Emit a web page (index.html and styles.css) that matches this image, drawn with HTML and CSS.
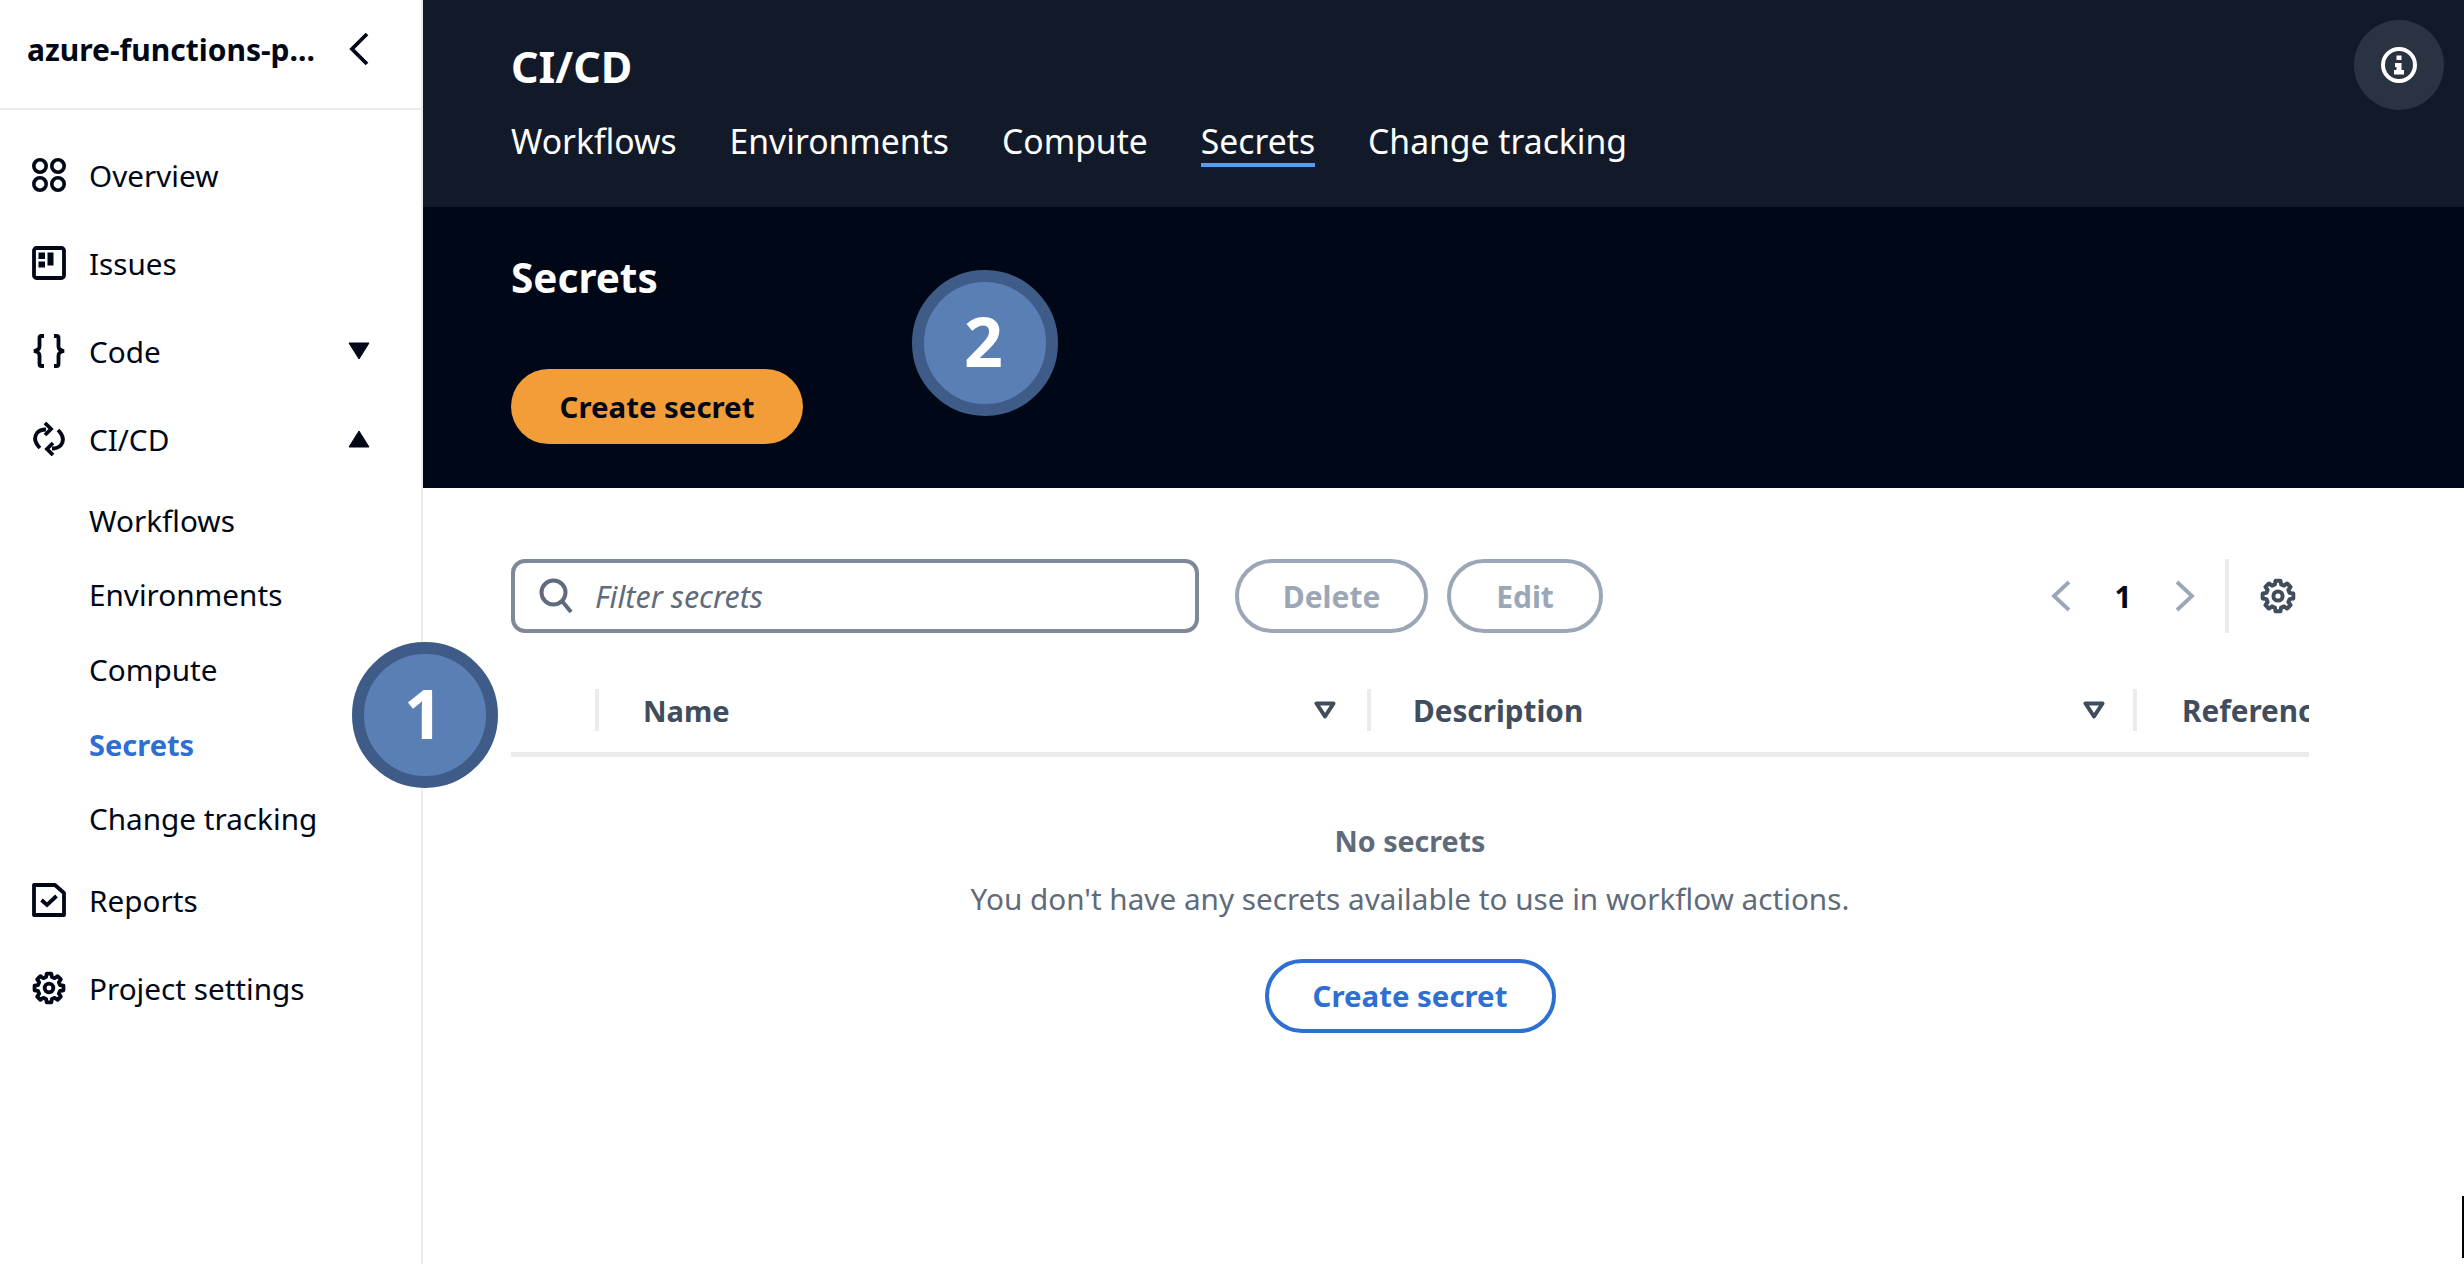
FILE: index.html
```html
<!DOCTYPE html>
<html lang="en">

<head>
    <meta charset="UTF-8">
    <title>Secrets - CI/CD</title>
    <link rel="stylesheet" href="styles.css">
</head>

<body>
    <svg class="defs" width="0" height="0">
        <symbol id="gear" viewBox="0 0 36 36">
            <polygon transform="translate(18 18)" fill="none" stroke="currentColor" stroke-width="4" stroke-linejoin="round" points="11.59,-3.11 15.31,-2.42 15.31,2.42 11.59,3.11 10.39,6 12.54,9.11 9.11,12.54 6,10.39 3.11,11.59 2.42,15.31 -2.42,15.31 -3.11,11.59 -6,10.39 -9.11,12.54 -12.54,9.11 -10.39,6 -11.59,3.11 -15.31,2.42 -15.31,-2.42 -11.59,-3.11 -10.39,-6 -12.54,-9.11 -9.11,-12.54 -6,-10.39 -3.11,-11.59 -2.42,-15.31 2.42,-15.31 3.11,-11.59 6,-10.39 9.11,-12.54 12.54,-9.11 10.39,-6" />
            <circle cx="18" cy="18" r="4.6" fill="none" stroke="currentColor" stroke-width="4" />
        </symbol>
        <symbol id="sort" viewBox="0 0 22 18">
            <path d="M2.500 2.500h17L11 15.500z" fill="none" stroke="currentColor" stroke-width="4" stroke-linejoin="round" />
        </symbol>
    </svg>

    <div class="app">
        <aside class="sidebar">
            <div class="project">
                <span class="project-name">azure-functions-p...</span>
                <svg class="back" viewBox="0 0 20 34">
                    <path d="M18 2L3 17l15 15" fill="none" stroke="currentColor" stroke-width="3.8" />
                </svg>
            </div>
            <nav class="nav">
                <a class="nav-item">
                    <svg class="nav-icon" viewBox="0 0 34 34" fill="none" stroke="currentColor" stroke-width="3.6">
                        <circle cx="8" cy="8" r="6.200" />
                        <circle cx="26" cy="8" r="6.200" />
                        <circle cx="8" cy="26" r="6.200" />
                        <circle cx="26" cy="26" r="6.200" />
                    </svg>
                    Overview
                </a>
                <a class="nav-item">
                    <svg class="nav-icon" viewBox="0 0 34 34">
                        <rect x="2" y="2" width="30" height="30" rx="2.500" fill="none" stroke="currentColor" stroke-width="3.800" />
                        <path d="M6.500 6.500h6.500v6.500H6.500zM6.500 15.500h6.500v6H6.500zM15.500 6.500h6v13h-6z" fill="currentColor" />
                    </svg>
                    Issues
                </a>
                <a class="nav-item">
                    <svg class="nav-icon" viewBox="0 0 34 34" fill="none" stroke="currentColor" stroke-width="3.800">
                        <path d="M12 2H9.500Q7.500 2 7.500 4v8.500Q7.500 16 2 17q5.500 1 5.500 4.500V30q0 2 2 2H12" />
                        <path d="M22 2h2.500q2 0 2 2v8.500q0 3.500 5.500 4.500-5.500 1-5.500 4.500V30q0 2-2 2H22" />
                    </svg>
                    Code
                    <svg class="caret" viewBox="0 0 22 18"><path d="M1 1h20L11 17z" fill="currentColor" stroke="currentColor" stroke-linejoin="round" /></svg>
                </a>
                <a class="nav-item">
                    <svg class="nav-icon" viewBox="0 0 34 34" fill="none" stroke="currentColor" stroke-width="3.800">
                        <path d="M8 26Q0 18 5 11q3-3.500 9-3.500" />
                        <path d="M13 1l6 6-6 6" />
                        <path d="M26 8q8 8 3 15-3 3.500-9 3.500" />
                        <path d="M21 33l-6-6 6-6" />
                    </svg>
                    CI/CD
                    <svg class="caret" viewBox="0 0 22 18"><path d="M1 17h20L11 1z" fill="currentColor" stroke="currentColor" stroke-linejoin="round" /></svg>
                </a>
                <div class="subnav">
                    <a class="sub-item">Workflows</a>
                    <a class="sub-item">Environments</a>
                    <a class="sub-item">Compute</a>
                    <a class="sub-item active">Secrets</a>
                    <a class="sub-item">Change tracking</a>
                </div>
                <a class="nav-item">
                    <svg class="nav-icon" viewBox="0 0 34 34" fill="none" stroke="currentColor" stroke-width="3.800">
                        <path d="M2 2h21l9 8v22H2z" stroke-linejoin="round" />
                        <path d="M9.500 17l5.500 5 9.500-9" />
                    </svg>
                    Reports
                </a>
                <a class="nav-item">
                    <svg class="nav-icon"><use href="#gear" /></svg>
                    Project settings
                </a>
            </nav>
        </aside>

        <main class="main">
            <header class="topbar">
                <h1 class="page-title">CI/CD</h1>
                <div class="tabs">
                    <a class="tab">Workflows</a>
                    <a class="tab">Environments</a>
                    <a class="tab">Compute</a>
                    <a class="tab active">Secrets</a>
                    <a class="tab">Change tracking</a>
                </div>
                <button class="info-btn">
                    <svg viewBox="0 0 36 36" width="36" height="36">
                        <circle cx="18" cy="18" r="16" fill="none" stroke="currentColor" stroke-width="4" />
                        <path d="M15.500 8.500h5v4.500h-5zM14 16h6.500v7H23v4.500H13V23h2.500v-3H14z" fill="currentColor" />
                    </svg>
                </button>
            </header>

            <section class="hero">
                <h2 class="hero-title">Secrets</h2>
                <button class="btn-primary">Create secret</button>
            </section>

            <section class="content">
                <div class="toolbar">
                    <div class="search">
                        <svg class="search-icon" viewBox="0 0 34 36" fill="none" stroke="currentColor" stroke-width="4">
                            <circle cx="14.500" cy="14.500" r="12" />
                            <path d="M23 23l9 11" />
                        </svg>
                        <span class="search-text">Filter secrets</span>
                    </div>
                    <button class="btn-disabled delete">Delete</button>
                    <button class="btn-disabled edit">Edit</button>
                    <div class="pager">
                        <svg class="pager-arrow" viewBox="0 0 20 32"><path d="M18 2L3 16l15 14" fill="none" stroke="currentColor" stroke-width="3.800" /></svg>
                        <span class="page-num">1</span>
                        <svg class="pager-arrow" viewBox="0 0 20 32"><path d="M2 2l15 14L2 30" fill="none" stroke="currentColor" stroke-width="3.800" /></svg>
                        <span class="pager-divider"></span>
                        <svg class="pager-gear"><use href="#gear" /></svg>
                    </div>
                </div>

                <div class="table-head">
                    <div></div>
                    <div class="col col-name">Name<svg class="sort"><use href="#sort" /></svg></div>
                    <div class="col col-desc">Description<svg class="sort"><use href="#sort" /></svg></div>
                    <div class="col col-ref">Reference name</div>
                </div>

                <div class="empty">
                    <div class="empty-title">No secrets</div>
                    <p class="empty-text">You don't have any secrets available to use in workflow actions.</p>
                    <button class="btn-outline">Create secret</button>
                </div>
            </section>
        </main>
    </div>

    <div class="step step-one">1</div>
    <div class="step step-two">2</div>
    <div class="edge-mark"></div>
</body>

</html>
```

FILE: styles.css
```css
* {
    box-sizing: border-box;
}

body {
    margin: 0;
    background: #ffffff;
    color: #000716;
    font-family: "Noto Sans", sans-serif;
    overflow: hidden;
}

.defs {
    position: absolute;
}

button {
    font-family: inherit;
}

.app {
    display: flex;
    height: 1264px;
}

/* sidebar */
.sidebar {
    width: 423px;
    flex-shrink: 0;
    border-right: 2px solid #e9ebed;
}

.project {
    display: flex;
    align-items: center;
    justify-content: space-between;
    height: 110px;
    padding: 0 52px 10px 27px;
    border-bottom: 2px solid #e9ebed;
}

.project-name {
    font-size: 30px;
    font-weight: 700;
    white-space: nowrap;
}

.back {
    width: 20px;
    height: 34px;
}

.nav {
    padding-top: 22px;
}

.nav-item {
    display: flex;
    align-items: center;
    height: 88px;
    padding: 0 51px 2px 32px;
    font-size: 29.7px;
}

.nav-icon {
    width: 34px;
    height: 34px;
    margin-right: 23px;
}

.caret {
    width: 22px;
    height: 18px;
    margin-left: auto;
}

.subnav {
    display: flex;
    flex-direction: column;
    height: 373px;
}

.sub-item {
    flex: 1;
    display: flex;
    align-items: center;
    padding: 0 0 2px 89px;
    font-size: 29.7px;
}

.sub-item.active {
    color: #2d6fd2;
    font-size: 29px;
    font-weight: 700;
}

/* main column */
.main {
    flex: 1;
    min-width: 0;
    position: relative;
}

.topbar {
    height: 207px;
    padding: 42px 0 0 88px;
    background: #121a29;
    color: #ffffff;
}

.page-title {
    margin: 0;
    font-size: 43px;
    line-height: 50px;
    font-weight: 700;
}

.tabs {
    display: flex;
    gap: 53px;
    margin-top: 27px;
}

.tab {
    height: 48px;
    font-size: 33.7px;
    line-height: 44px;
}

.tab.active {
    border-bottom: 4px solid #5c9bea;
}

.info-btn {
    position: absolute;
    top: 20px;
    right: 20px;
    display: flex;
    align-items: center;
    justify-content: center;
    width: 90px;
    height: 90px;
    padding: 0;
    border: none;
    border-radius: 50%;
    background: #2a3342;
    color: #ffffff;
}

.hero {
    height: 281px;
    padding: 46px 0 0 88px;
    background: #000716;
    color: #ffffff;
}

.hero-title {
    margin: 0;
    font-size: 40.5px;
    line-height: 50px;
    font-weight: 700;
}

.btn-primary {
    display: block;
    width: 292px;
    height: 75px;
    margin-top: 66px;
    border: none;
    border-radius: 38px;
    background: #f29d38;
    color: #000716;
    font-size: 29.4px;
    font-weight: 700;
}

.content {
    padding: 71px 155px 0 88px;
}

.toolbar {
    display: flex;
    align-items: center;
    height: 74px;
}

.search {
    display: flex;
    align-items: center;
    width: 688px;
    height: 74px;
    padding-left: 24px;
    border: 4px solid #7d8998;
    border-radius: 14px;
    color: #5f6b7a;
}

.search-icon {
    width: 34px;
    height: 36px;
    margin-right: 22px;
}

.search-text {
    font-size: 30.5px;
    font-style: italic;
}

.btn-disabled {
    height: 74px;
    border: 4px solid #9ba7b6;
    border-radius: 37px;
    background: #ffffff;
    color: #9ba7b6;
    font-size: 30px;
    font-weight: 700;
}

.delete {
    width: 193px;
    margin-left: 36px;
}

.edit {
    width: 156px;
    margin-left: 19px;
}

.pager {
    display: flex;
    align-items: center;
    height: 74px;
    margin-left: auto;
    padding-right: 13px;
    color: #9ba7b6;
}

.pager-arrow {
    width: 20px;
    height: 32px;
}

.page-num {
    width: 104px;
    text-align: center;
    color: #000716;
    font-size: 30px;
    font-weight: 700;
}

.pager-divider {
    width: 4px;
    height: 74px;
    margin: 0 31px 0 30px;
    background: #e9ebed;
}

.pager-gear {
    width: 36px;
    height: 36px;
    color: #414d5c;
}

.table-head {
    display: grid;
    grid-template-columns: 84px 772px 766px 176px;
    align-items: center;
    height: 68px;
    margin-top: 56px;
    padding-bottom: 26px;
    border-bottom: 5px solid #e9ebed;
    color: #414d5c;
    font-size: 29.7px;
    font-weight: 700;
}

.col {
    display: flex;
    align-items: center;
    justify-content: space-between;
    height: 42px;
    padding: 0 31px 0 45px;
    border-left: 4px solid #e9ebed;
    white-space: nowrap;
    overflow: hidden;
}

.sort {
    width: 22px;
    height: 18px;
}

.col-name {
    padding-left: 44px;
    font-size: 29px;
}

.col-desc {
    padding-left: 42px;
    padding-right: 28px;
}

.col-ref {
    padding-right: 0;
}

.empty {
    display: flex;
    flex-direction: column;
    align-items: center;
    padding-top: 62px;
    color: #5f6b7a;
    font-size: 29.7px;
}

.empty-title {
    line-height: 44px;
    font-size: 28.6px;
    font-weight: 700;
}

.empty-text {
    margin: 14px 0 0;
    line-height: 44px;
}

.btn-outline {
    width: 291px;
    height: 74px;
    margin-top: 38px;
    border: 4px solid #2d6fd2;
    border-radius: 37px;
    background: #ffffff;
    color: #2d6fd2;
    font-size: 29.4px;
    font-weight: 700;
}

/* numbered callouts lying over the page */
.step {
    position: absolute;
    display: flex;
    align-items: center;
    justify-content: center;
    width: 146px;
    height: 146px;
    padding: 0 3px 5px 0;
    border: 12px solid #3f5b88;
    border-radius: 50%;
    background: #5a7fb5;
    color: #ffffff;
    font-size: 68px;
    font-weight: 700;
}

.step-one {
    left: 352px;
    top: 642px;
}

.step-two {
    left: 912px;
    top: 270px;
}

.edge-mark {
    position: absolute;
    right: 0;
    top: 1196px;
    width: 2px;
    height: 62px;
    background: #000000;
}
```
